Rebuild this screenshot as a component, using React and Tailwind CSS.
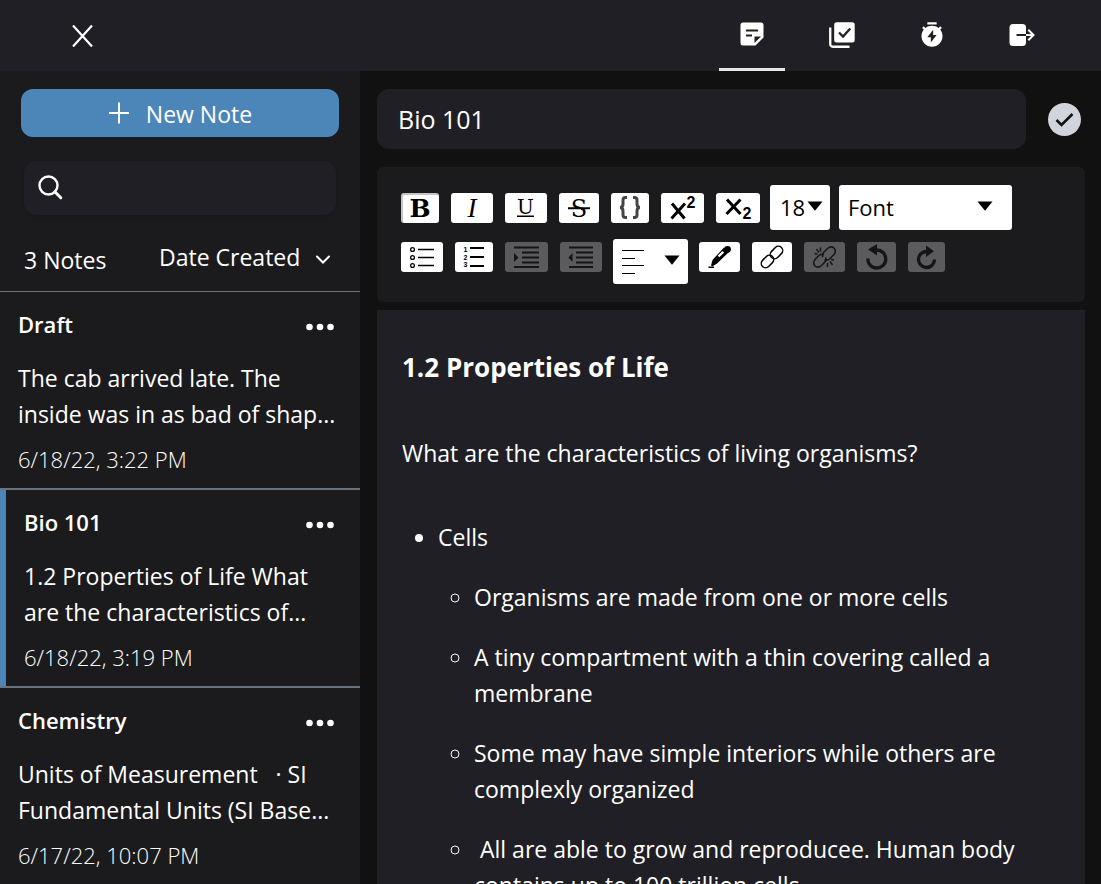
import React, { useState } from "react";
import { RiTimerFlashFill } from "react-icons/ri";

function NoteIcon() {
  return (
    <svg width="24" height="24" viewBox="0 0 24 24" aria-hidden="true">
      <path
        fill="currentColor"
        fillRule="evenodd"
        d="M3 .5h18A2.5 2.5 0 0 1 23.500 3v12.500L15.500 23.500H3A2.500 2.500 0 0 1 .5 21V3A2.500 2.500 0 0 1 3 .5ZM6 7.500v2h12v-2ZM6 12.500v2h6v-2ZM14.500 14.500V21L21 14.500Z"
      />
    </svg>
  );
}

function TasksIcon() {
  return (
    <svg width="26" height="26" viewBox="0 0 26 26" aria-hidden="true">
      <path d="M1.250 5.500V22.250A2.500 2.500 0 0 0 3.750 24.750H20.500" fill="none" stroke="currentColor" strokeWidth="2.300" />
      <rect x="5.200" y="0.300" width="20.500" height="20.200" rx="2.500" fill="currentColor" />
      <path d="M10 10.500l4 4 7.300-8" fill="none" stroke="#201f25" strokeWidth="2.300" />
    </svg>
  );
}

function LogoutIcon() {
  return (
    <svg width="26" height="24" viewBox="0 0 26 24" aria-hidden="true">
      <rect x="0.500" y="1" width="16.500" height="22" rx="3.500" fill="currentColor" />
      <path d="M7.500 12H17" stroke="#201f25" strokeWidth="2" />
      <path d="M17 12h7.500M19.300 6.800l5.200 5.200-5.200 5.200" fill="none" stroke="currentColor" strokeWidth="2" />
    </svg>
  );
}

const TABS = [
  { label: "Notes", icon: <NoteIcon /> },
  { label: "Tasks", icon: <TasksIcon /> },
  { label: "Timer", icon: <RiTimerFlashFill size={28} /> },
  { label: "Log out", icon: <LogoutIcon /> },
];

const NOTES = [
  {
    title: "Draft",
    preview: ["The cab arrived late. The", "inside was in as bad of shap..."],
    date: "6/18/22, 3:22 PM",
  },
  {
    title: "Bio 101",
    preview: ["1.2 Properties of Life What", "are the characteristics of..."],
    date: "6/18/22, 3:19 PM",
  },
  {
    title: "Chemistry",
    preview: ["Units of Measurement \u00a0 · SI", "Fundamental Units (SI Base..."],
    date: "6/17/22, 10:07 PM",
  },
];

function Header() {
  return (
    <header className="flex h-[71px] shrink-0 items-stretch justify-between bg-[#201f25] pl-[70px] pr-[46px]">
      <button type="button" aria-label="Close" className="flex items-center px-0.5">
        <svg width="21" height="22" viewBox="0 0 21 22" aria-hidden="true">
          <path d="M1 .5L20 21.500M20 .5L1 21.500" stroke="currentColor" strokeWidth="2.200" />
        </svg>
      </button>
      <nav className="flex gap-6">
        {TABS.map((tab, i) => (
          <button
            key={tab.label}
            type="button"
            aria-label={tab.label}
            className={
              i === 0
                ? "flex w-[66px] items-center justify-center border-b-3 border-gray-200"
                : "flex w-[66px] items-center justify-center pb-px"
            }
          >
            {tab.icon}
          </button>
        ))}
      </nav>
    </header>
  );
}

function Sidebar() {
  const [selected, setSelected] = useState("Bio 101");
  return (
    <aside className="flex w-[360px] shrink-0 flex-col bg-[#1b1b1d]">
      <div className="px-[21px] pt-[18px]">
        <button
          type="button"
          className="flex h-12 w-full items-center justify-center gap-4 rounded-xl bg-[#4c86b8]"
        >
          <svg width="22" height="22" viewBox="0 0 22 22" aria-hidden="true">
            <path d="M11 .5v21M1 11h20" stroke="currentColor" strokeWidth="2" />
          </svg>
          <span className="pt-0.5">New Note</span>
        </button>
      </div>
      <div className="px-6 pt-6">
        <label className="flex h-[54px] items-center gap-3 rounded-xl bg-[#201f25] px-3.5 pb-0.5 shadow-sm">
          <svg width="25" height="25" viewBox="0 0 25 25" aria-hidden="true">
            <circle cx="10.500" cy="10.500" r="9" fill="none" stroke="currentColor" strokeWidth="2.400" />
            <path d="M16.800 16.800l6 6" stroke="currentColor" strokeWidth="3" strokeLinecap="round" />
          </svg>
          <input type="search" aria-label="Search notes" className="min-w-0 flex-1 bg-transparent outline-none" />
        </label>
      </div>
      <div className="flex items-start justify-between border-b border-gray-500 pb-3 pl-6 pr-[30px] pt-6">
        <p className="pt-[3px]">3 Notes</p>
        <div className="relative">
          <select aria-label="Sort notes" className="h-10 w-[171px] appearance-none bg-transparent pb-1 outline-none">
            <option>Date Created</option>
            <option>Date Modified</option>
            <option>Title</option>
          </select>
          <svg
            width="14"
            height="10"
            viewBox="0 0 14 10"
            aria-hidden="true"
            className="pointer-events-none absolute right-0 top-4"
          >
            <path d="M1 1.500l6 6 6-6" fill="none" stroke="currentColor" strokeWidth="2" strokeLinecap="round" />
          </svg>
        </div>
      </div>
      <ul>
        {NOTES.map((note) => (
          <li
            key={note.title}
            onClick={() => setSelected(note.title)}
            className="flex border-b-2 border-gray-500"
          >
            {note.title === selected && <div className="w-1.5 shrink-0 bg-[#4c86b8]" />}
            <article className="min-w-0 flex-1 pb-[11px] pl-[18px] pr-[26px] pt-3.5">
              <div className="flex items-center justify-between">
                <h2 className="text-[22px] font-semibold leading-9">{note.title}</h2>
                <button type="button" aria-label={"Options for " + note.title} className="pt-1.5">
                  <svg width="28" height="8" viewBox="0 0 28 8" aria-hidden="true" fill="currentColor">
                    <circle cx="3.500" cy="4" r="3.300" />
                    <circle cx="14" cy="4" r="3.300" />
                    <circle cx="24.500" cy="4" r="3.300" />
                  </svg>
                </button>
              </div>
              <p className="mt-[18px] whitespace-nowrap">
                {note.preview[0]}
                <br />
                {note.preview[1]}
              </p>
              <p className="mt-[9px] text-[22px] font-light leading-9">{note.date}</p>
            </article>
          </li>
        ))}
      </ul>
    </aside>
  );
}

function Tool({ label, className, disabled, children }) {
  return (
    <button
      type="button"
      aria-label={label}
      disabled={disabled}
      className={
        "flex h-[30px] shrink-0 items-center justify-center overflow-hidden rounded-[3px] " +
        (disabled ? "bg-[#5b5b5d] text-[#151517] " : "bg-white text-black ") +
        className
      }
    >
      {children}
    </button>
  );
}

function Glyph({ w, children }) {
  return (
    <svg width={w} height="30" viewBox={"0 0 " + w + " 30"} fill="none" stroke="currentColor" aria-hidden="true">
      {children}
    </svg>
  );
}

function Caret({ className }) {
  return (
    <svg width="16" height="10" viewBox="0 0 16 10" fill="currentColor" aria-hidden="true" className={className}>
      <path d="M.5 .5h15L8 9.800Z" />
    </svg>
  );
}

function Toolbar() {
  return (
    <div className="mt-[18px] shrink-0 rounded-md bg-[#1b1b1d] px-6 pb-[18px] pt-[18px] text-black">
      <div className="flex flex-wrap items-center gap-2.5">
        <div className="flex flex-wrap gap-3">
          <Tool label="Bold" className="w-[38px] border-l-2 border-t-2 border-[#c4c4c4] pr-0.5">
            <span className="font-['DejaVu_Serif',serif] text-[25px] font-bold leading-[26px]">B</span>
          </Tool>
          <Tool label="Italic" className="w-[42px]">
            <span className="font-['Liberation_Serif',serif] text-[27px] italic leading-[30px]">I</span>
          </Tool>
          <Tool label="Underline" className="w-[42px]">
            <Glyph w={42}>
              <text x="20.500" y="20.500" textAnchor="middle" fill="currentColor" stroke="none" className="font-['DejaVu_Serif',serif] text-[20px]">
                U
              </text>
              <path d="M12 23.300h17" strokeWidth="1.500" />
            </Glyph>
          </Tool>
          <Tool label="Strikethrough" className="w-10">
            <Glyph w={40}>
              <text x="20" y="23.500" textAnchor="middle" fill="currentColor" stroke="none" className="font-['DejaVu_Serif',serif] text-[24px]">
                S
              </text>
              <path d="M9 16.800h13" stroke="white" strokeWidth="2" />
              <path d="M9 15.300h22" strokeWidth="2" />
            </Glyph>
          </Tool>
          <Tool label="Code" className="w-[38px]">
            <Glyph w={38}>
              <path
                d="M16 4.500h-1.500q-2.500 0-2.500 2.500v4q0 3.500-3 3.500q3 0 3 3.500v4q0 2.500 2.500 2.500H16M22 4.500h1.500q2.500 0 2.500 2.500v4q0 3.500 3 3.500q-3 0-3 3.500v4q0 2.500-2.500 2.500H22"
                stroke="#444"
                strokeWidth="3"
              />
            </Glyph>
          </Tool>
          <Tool label="Superscript" className="w-[43px]">
            <Glyph w={43}>
              <path d="M11 10.500L23.500 25.500M24 10.500L10.500 25.500" strokeWidth="3" />
              <text x="25.500" y="15" fill="currentColor" stroke="none" className="font-['Liberation_Sans',sans-serif] text-[16px] font-bold">
                2
              </text>
            </Glyph>
          </Tool>
          <Tool label="Subscript" className="w-11">
            <Glyph w={44}>
              <path d="M11 6.500L24.500 21M24.500 6.500L10.500 21" strokeWidth="3" />
              <text x="26.500" y="25.500" fill="currentColor" stroke="none" className="font-['Liberation_Sans',sans-serif] text-[16px] font-bold">
                2
              </text>
            </Glyph>
          </Tool>
        </div>
        <div className="flex gap-[9px]">
          <div className="relative">
            <select
              aria-label="Font size"
              className="h-[45px] w-[60px] appearance-none rounded-[3px] bg-white pb-0.5 pl-2.5 text-[22px] outline-none"
            >
              <option>18</option>
              <option>24</option>
            </select>
            <Caret className="pointer-events-none absolute right-[7px] top-4" />
          </div>
          <div className="relative">
            <select
              aria-label="Font family"
              className="h-[45px] w-[173px] appearance-none rounded-[3px] bg-white pb-0.5 pl-[9px] text-[22px] outline-none"
            >
              <option>Font</option>
              <option>Serif</option>
            </select>
            <Caret className="pointer-events-none absolute right-[19px] top-4" />
          </div>
        </div>
      </div>
      <div className="mt-[9px] flex flex-wrap items-start gap-[11px]">
        <div className="flex flex-wrap gap-3 pt-[3px]">
          <Tool label="Bulleted list" className="w-[42px]">
            <Glyph w={42}>
              <path d="M17 7.500h16M17 15.500h16M17 23.500h16" strokeWidth="1.300" />
              <circle cx="11.500" cy="7.500" r="1.900" strokeWidth="1.300" />
              <circle cx="11.500" cy="15.500" r="1.900" strokeWidth="1.300" />
              <circle cx="11.500" cy="23.500" r="1.900" strokeWidth="1.300" />
            </Glyph>
          </Tool>
          <Tool label="Numbered list" className="w-[38px]">
            <Glyph w={38}>
              <path d="M15 6h14M15 15h14M15 24h14" strokeWidth="2" />
              <g fill="currentColor" stroke="none" className="font-['Liberation_Sans',sans-serif] text-[7px] font-bold">
                <text x="8.500" y="10">1</text>
                <text x="8.500" y="17.500">2</text>
                <text x="8.500" y="25">3</text>
              </g>
            </Glyph>
          </Tool>
          <Tool label="Indent" disabled className="w-[43px]">
            <Glyph w={43}>
              <path d="M9 5.500h25M17 10.500h17M17 15.500h17M17 20.500h17M9 25h25" strokeWidth="1.800" />
              <path d="M9 11l4.500 4.500L9 20Z" fill="currentColor" stroke="none" />
            </Glyph>
          </Tool>
          <Tool label="Outdent" disabled className="w-[42px]">
            <Glyph w={42}>
              <path d="M9 5.500h24M16 10.500h17M16 15.500h17M16 20.500h17M9 25h24" strokeWidth="1.800" />
              <path d="M12.500 11L8.500 15.500l4 4.500Z" fill="currentColor" stroke="none" />
            </Glyph>
          </Tool>
        </div>
        <button
          type="button"
          aria-label="Text alignment"
          aria-haspopup="menu"
          className="flex h-[45px] w-[75px] items-center justify-between rounded-[3px] bg-white pl-[9px] pr-2"
        >
          <svg width="22" height="26" viewBox="0 0 22 26" fill="none" stroke="currentColor" aria-hidden="true">
            <path d="M0 1.500h22M0 9.500h13M0 16.500h22M0 24.500h13" strokeWidth="1.100" />
          </svg>
          <Caret className="-mt-1" />
        </button>
        <div className="flex flex-wrap gap-3 pt-[3px]">
          <Tool label="Text color" className="w-[41px]">
            <Glyph w={41}>
              <path d="M9.500 25.300h5.500" strokeWidth="1.500" />
              <path d="M12 23.500l1.500-5.500L25 5.500l5 4.500L18 21.500l-4.500 2.800Z" fill="currentColor" stroke="none" />
              <path d="M19.500 14.500l4.800-4.800" stroke="white" strokeWidth="2.300" />
              <circle cx="28.500" cy="7.300" r="3.400" fill="currentColor" stroke="none" />
            </Glyph>
          </Tool>
          <Tool label="Insert link" className="w-10">
            <Glyph w={40}>
              <g strokeWidth="1.500">
                <rect x="-7" y="-4.300" width="14" height="8.600" rx="4.300" transform="translate(24.500 10.500) rotate(-45)" />
                <rect x="-7" y="-4.300" width="14" height="8.600" rx="4.300" transform="translate(15.500 19.500) rotate(-45)" />
              </g>
            </Glyph>
          </Tool>
          <Tool label="Remove link" disabled className="w-[41px]">
            <Glyph w={41}>
              <g strokeWidth="1.500">
                <path d="M19 15q-1.500-2.500 1-5l3.500-3.500q3.500-3 6.500-.5q2.500 3 0 6.500l-4.500 4.500q-2.500 2-5 .8" />
                <path d="M21.500 15.500q1.500 2.500-1 5l-3 3q-3.500 3-6.500 .5q-2.500-3 0-6.500l4-4q2.500-2 5-.8" />
                <path d="M16.500 5.500v4M12.500 7l2.500 3.500M10.500 11.500l3 .5M23.500 21v4M26 19.500l2.500 3.500M27 17.500l3 .5" />
              </g>
            </Glyph>
          </Tool>
          <Tool label="Undo" disabled className="w-[39px]">
            <Glyph w={39}>
              <path d="M10.800 16.500a9 9 0 1 0 8.700-8.500" strokeWidth="3.300" />
              <path d="M11 7.500L20 2v11.500Z" fill="currentColor" stroke="none" />
            </Glyph>
          </Tool>
          <Tool label="Redo" disabled className="w-[37px]">
            <Glyph w={37}>
              <path d="M26.500 17.500a8 8 0 1 1-7.500-8" strokeWidth="3.300" />
              <path d="M26 9.300L18 3.500v11.500Z" fill="currentColor" stroke="none" />
            </Glyph>
          </Tool>
        </div>
      </div>
    </div>
  );
}

function Document() {
  return (
    <article className="mt-2 min-h-0 flex-1 overflow-y-auto bg-[#201f25] px-[25px] pt-[39px] [scrollbar-width:none]">
      <h1 className="text-[26px] font-bold leading-9">1.2 Properties of Life</h1>
      <p className="mt-[50px]">What are the characteristics of living organisms?</p>
      <ul className="mt-12 list-disc pl-9">
        <li>
          Cells
          <ul className="mt-6 list-[circle] space-y-6 pl-9">
            <li>Organisms are made from one or more cells</li>
            <li>A tiny compartment with a thin covering called a membrane</li>
            <li>Some may have simple interiors while others are complexly organized</li>
            <li>&nbsp;All are able to grow and reproducee. Human body contains up to 100 trillion cells</li>
          </ul>
        </li>
      </ul>
    </article>
  );
}

export default function App() {
  return (
    <div className="flex h-screen flex-col overflow-hidden bg-[#111111] font-['Open_Sans','Noto_Sans',sans-serif] text-[23px] leading-9 text-white">
      <Header />
      <div className="flex min-h-0 flex-1">
        <Sidebar />
        <main className="flex min-w-0 flex-1 flex-col pl-[17px] pr-4 pt-[18px]">
          <div className="flex items-center gap-[22px]">
            <input
              aria-label="Note title"
              defaultValue="Bio 101"
              className="h-[60px] min-w-0 flex-1 rounded-xl bg-[#201f25] px-[21px] text-[25px] outline-none"
            />
            <button type="button" aria-label="Save note" className="mr-1 shrink-0">
              <svg width="33" height="33" viewBox="0 0 33 33" aria-hidden="true">
                <circle cx="16.500" cy="16.500" r="16.500" fill="#d1d5db" />
                <path d="M8.500 17l5 5L24.500 11" fill="none" stroke="#111" strokeWidth="2.600" />
              </svg>
            </button>
          </div>
          <Toolbar />
          <Document />
        </main>
      </div>
    </div>
  );
}
